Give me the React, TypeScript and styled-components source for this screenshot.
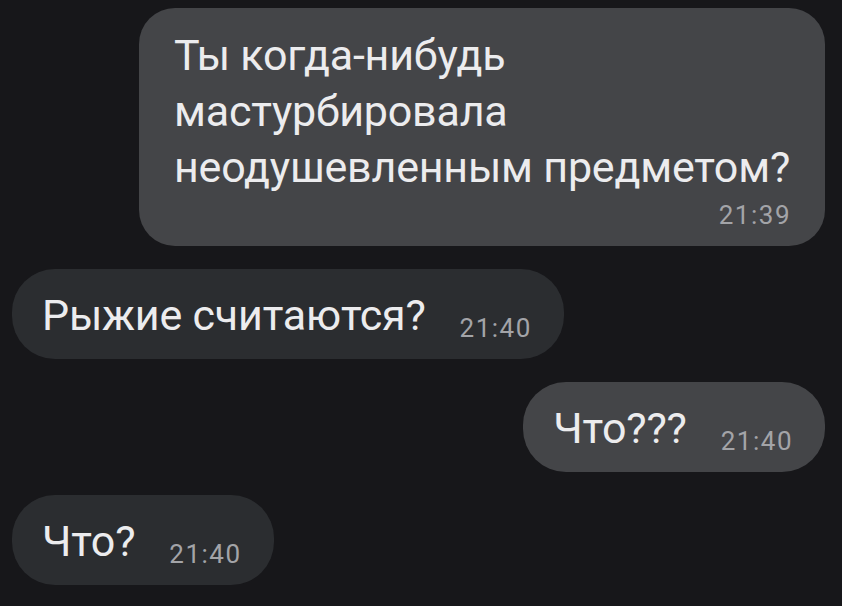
import React from 'react';
import styled, { createGlobalStyle } from 'styled-components';

type Message = {
  text: string,
  time: string,
  mine: boolean,
  multiline?: boolean,
}

const messages: Message[] = [
  { text: 'Ты когда-нибудь\nмастурбировала\nнеодушевленным предметом?', time: '21:39', mine: true, multiline: true },
  { text: 'Рыжие считаются?', time: '21:40', mine: false },
  { text: 'Что???', time: '21:40', mine: true },
  { text: 'Что?', time: '21:40', mine: false },
];

const GlobalStyle = createGlobalStyle`
  html, body {
    margin: 0;
    padding: 0;
    background: #17171a;
  }
  body {
    font-family: Roboto, "Liberation Sans", sans-serif;
    -webkit-font-smoothing: antialiased;
  }
`;

const ChatContainer = styled.div`
  display: flex;
  flex-direction: column;
  gap: 23px;
  box-sizing: border-box;
  width: 842px;
  height: 606px;
  padding: 8px 17px 0 12px;
  overflow: hidden;
  background: #17171a;
`;

const Row = styled.div<{ $mine: boolean }>`
  display: flex;
  justify-content: ${({ $mine }) => ($mine ? 'flex-end' : 'flex-start')};
`;

const Bubble = styled.div<{ $mine: boolean }>`
  display: flex;
  align-items: flex-end;
  gap: 34px;
  box-sizing: border-box;
  height: 90px;
  padding: 0 32px 16px 30px;
  border-radius: 43px;
  background: ${({ $mine }) => ($mine ? '#444548' : '#2b2d30')};
`;

const BigBubble = styled.div`
  display: flex;
  flex-direction: column;
  box-sizing: border-box;
  width: 686px;
  padding: 19px 34px 16px 35px;
  border-radius: 36px;
  background: #444548;
`;

const Text = styled.span`
  color: #ececee;
  font-size: 43px;
  line-height: 56px;
  letter-spacing: -0.2px;
  white-space: pre;
`;

const Time = styled.span<{ $block?: boolean }>`
  color: #a3a4a8;
  font-size: 26px;
  line-height: 30px;
  letter-spacing: 1.5px;
  margin-top: ${({ $block }) => ($block ? '5px' : '0')};
  align-self: ${({ $block }) => ($block ? 'flex-end' : 'auto')};
`;

function ChatBubble({ text, time, mine, multiline }: Message): JSX.Element {
  if (multiline) {
    return (
      <BigBubble>
        <Text>{text}</Text>
        <Time $block>{time}</Time>
      </BigBubble>
    );
  }
  return (
    <Bubble $mine={mine}>
      <Text>{text}</Text>
      <Time>{time}</Time>
    </Bubble>
  );
}

export default function App(): JSX.Element {
  return (
    <>
      <GlobalStyle />
      <ChatContainer>
        {messages.map((m, i) => (
          <Row key={i} $mine={m.mine}>
            <ChatBubble {...m} />
          </Row>
        ))}
      </ChatContainer>
    </>
  );
}
